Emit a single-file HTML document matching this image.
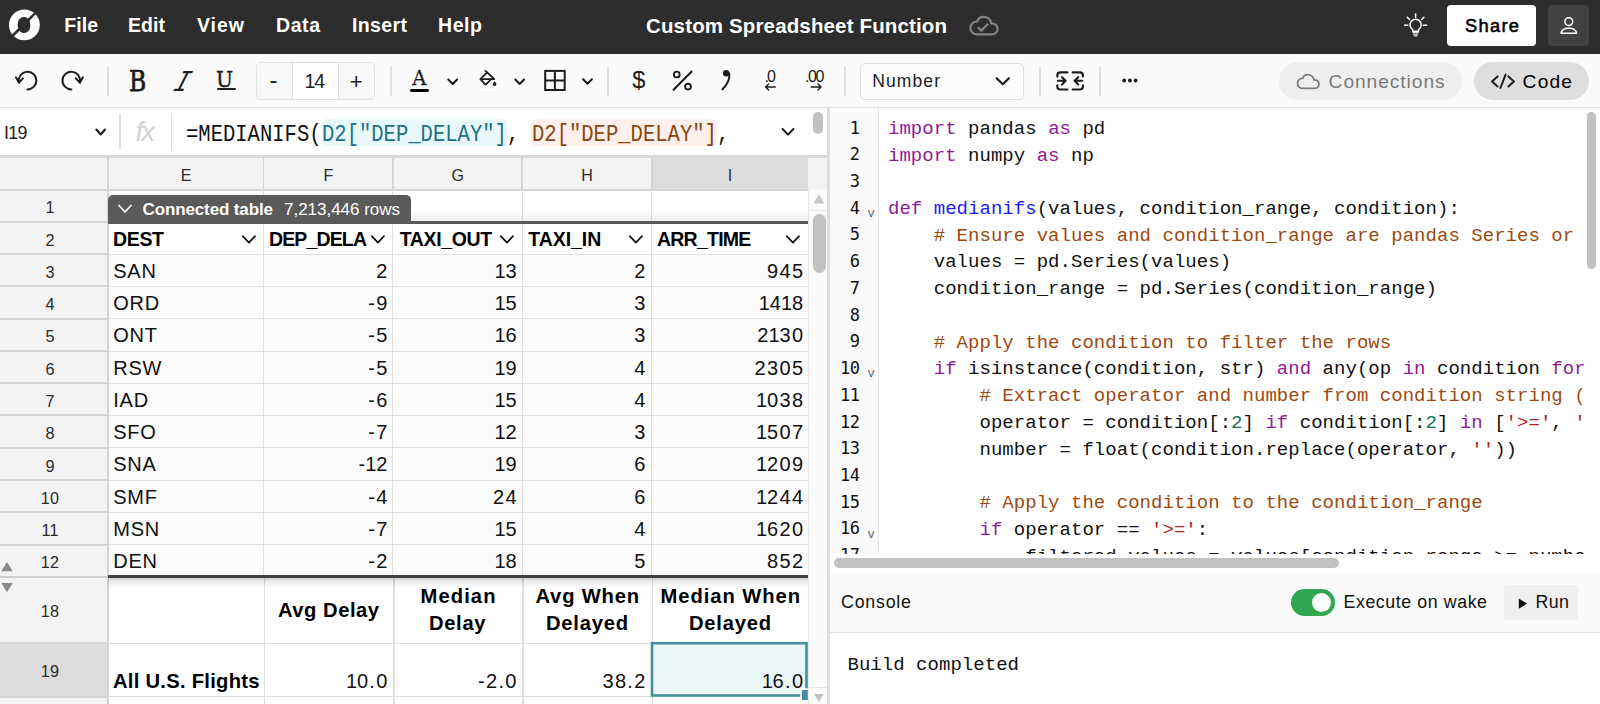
<!DOCTYPE html>
<html lang="en"><head><meta charset="utf-8"><title>Custom Spreadsheet Function</title>
<style>
html,body{margin:0;padding:0;}
body{width:1600px;height:704px;overflow:hidden;position:relative;background:#fff;font-family:"Liberation Sans", sans-serif;color:#000;}
#r{position:absolute;left:0;top:0;width:1600px;height:704px;overflow:hidden;}
#r div,#r span,#r svg{position:absolute;}
#r span{white-space:pre;}
#r span span{position:static;}
#r .cl{position:absolute;}
.m{font-family:"DejaVu Sans Mono", "Liberation Mono", monospace;}
.lm{font-family:"Liberation Mono", "DejaVu Sans Mono", monospace;}
.sf{font-family:"DejaVu Serif", "Liberation Serif", serif;}
</style></head>
<body><div id="r">
<div style="left:0px;top:0px;width:1600px;height:54px;background:#2d2d2d;"></div>
<div style="left:1447.4px;top:5px;width:89px;height:41px;background:#fff;border-radius:4px;"></div>
<div style="left:1548.2px;top:5px;width:41px;height:41px;background:#424242;border-radius:4px;"></div>
<div style="left:0px;top:54px;width:1600px;height:53px;background:#fafafa;"></div>
<div style="left:0px;top:107px;width:1600px;height:1px;background:#e2e2e2;"></div>
<div style="left:107px;top:66px;width:2px;height:29.5px;background:#e0e0e0;"></div>
<div style="left:216.8px;top:88px;width:18.8px;height:2.2px;background:#1c1c1c;border-radius:1px;"></div>
<div style="left:256px;top:62px;width:118.5px;height:37.5px;background:#f8f8f8;border:1px solid #e0e0e0;border-radius:5px;box-sizing:border-box;"></div>
<div style="left:292px;top:63px;width:47px;height:35.5px;background:#fff;border-left:1px solid #e0e0e0;border-right:1px solid #e0e0e0;box-sizing:border-box;"></div>
<div style="left:389.5px;top:66px;width:2px;height:29.5px;background:#e0e0e0;"></div>
<div style="left:410.4px;top:89px;width:19px;height:2.8px;background:#000;border-radius:1.4px;"></div>
<div style="left:479px;top:89px;width:18px;height:2.4px;background:#fff;"></div>
<div style="left:607.4px;top:66px;width:2px;height:29.5px;background:#e0e0e0;"></div>
<div style="left:844px;top:66px;width:2px;height:29.5px;background:#e0e0e0;"></div>
<div style="left:860px;top:63px;width:164px;height:37px;background:#fcfcfc;border:1px solid #e0e0e0;border-radius:5px;box-sizing:border-box;"></div>
<div style="left:1039px;top:66px;width:2px;height:29.5px;background:#e0e0e0;"></div>
<div style="left:1099px;top:66px;width:2px;height:29.5px;background:#e0e0e0;"></div>
<div style="left:1279px;top:62px;width:182.6px;height:37.6px;background:#efefef;border-radius:19px;"></div>
<div style="left:1473.6px;top:62px;width:115.4px;height:37.6px;background:#dedede;border-radius:19px;"></div>
<div style="left:0px;top:108px;width:830px;height:47px;background:#fff;"></div>
<div style="left:0px;top:155px;width:828px;height:3.3px;background:#dadada;"></div>
<div style="left:119px;top:114px;width:1.6px;height:34.5px;background:#dcdcdc;"></div>
<div style="left:170.5px;top:114px;width:1.6px;height:34.5px;background:#dcdcdc;"></div>
<div style="left:321.83px;top:119.3px;width:185.35px;height:27.2px;background:#e7f8fc;border-radius:5px;"></div>
<div style="left:531.4399999999999px;top:119.3px;width:185.35px;height:27.2px;background:#fdf0ea;border-radius:5px;"></div>
<div style="left:813.3px;top:112.4px;width:9.5px;height:21.6px;background:#c1c1c1;border-radius:5px;"></div>
<div style="left:0px;top:158px;width:808px;height:32px;background:#f3f3f3;"></div>
<div style="left:651px;top:158px;width:157px;height:32px;background:#dcdcdc;"></div>
<div style="left:0px;top:190px;width:108px;height:514px;background:#f3f3f3;"></div>
<div style="left:0px;top:643.2px;width:108px;height:53px;background:#dcdcdc;"></div>
<div style="left:108px;top:190px;width:700px;height:64.6px;background:#fff;"></div>
<div style="left:108px;top:254.54000000000002px;width:700px;height:322.7px;background:#fbfbfb;"></div>
<div style="left:108px;top:578px;width:700px;height:126px;background:#fff;"></div>
<div style="left:107px;top:158px;width:2px;height:32px;background:#d4d4d4;"></div>
<div style="left:262.75px;top:158px;width:1.7px;height:32px;background:#d4d4d4;"></div>
<div style="left:392.04999999999995px;top:158px;width:1.7px;height:32px;background:#d4d4d4;"></div>
<div style="left:521.4499999999999px;top:158px;width:1.7px;height:32px;background:#d4d4d4;"></div>
<div style="left:650.85px;top:158px;width:1.7px;height:32px;background:#d4d4d4;"></div>
<div style="left:0px;top:189px;width:808px;height:2px;background:#d4d4d4;"></div>
<div style="left:0px;top:220.87px;width:108px;height:2px;background:#d4d4d4;"></div>
<div style="left:0px;top:253.14000000000001px;width:108px;height:2px;background:#d4d4d4;"></div>
<div style="left:108px;top:253.74px;width:700px;height:1.1px;background:#e2e2e2;"></div>
<div style="left:0px;top:285.41px;width:108px;height:2px;background:#d4d4d4;"></div>
<div style="left:108px;top:286.01px;width:700px;height:1.1px;background:#e2e2e2;"></div>
<div style="left:0px;top:317.68000000000006px;width:108px;height:2px;background:#d4d4d4;"></div>
<div style="left:108px;top:318.28000000000003px;width:700px;height:1.1px;background:#e2e2e2;"></div>
<div style="left:0px;top:349.95000000000005px;width:108px;height:2px;background:#d4d4d4;"></div>
<div style="left:108px;top:350.55px;width:700px;height:1.1px;background:#e2e2e2;"></div>
<div style="left:0px;top:382.22px;width:108px;height:2px;background:#d4d4d4;"></div>
<div style="left:108px;top:382.82px;width:700px;height:1.1px;background:#e2e2e2;"></div>
<div style="left:0px;top:414.49px;width:108px;height:2px;background:#d4d4d4;"></div>
<div style="left:108px;top:415.09px;width:700px;height:1.1px;background:#e2e2e2;"></div>
<div style="left:0px;top:446.76000000000005px;width:108px;height:2px;background:#d4d4d4;"></div>
<div style="left:108px;top:447.36px;width:700px;height:1.1px;background:#e2e2e2;"></div>
<div style="left:0px;top:479.03000000000003px;width:108px;height:2px;background:#d4d4d4;"></div>
<div style="left:108px;top:479.63px;width:700px;height:1.1px;background:#e2e2e2;"></div>
<div style="left:0px;top:511.30000000000007px;width:108px;height:2px;background:#d4d4d4;"></div>
<div style="left:108px;top:511.90000000000003px;width:700px;height:1.1px;background:#e2e2e2;"></div>
<div style="left:0px;top:543.57px;width:108px;height:2px;background:#d4d4d4;"></div>
<div style="left:108px;top:544.1700000000001px;width:700px;height:1.1px;background:#e2e2e2;"></div>
<div style="left:107px;top:190px;width:2px;height:514px;background:#d4d4d4;"></div>
<div style="left:263.0px;top:190px;width:1.2px;height:386px;background:#e0e0e0;"></div>
<div style="left:263.70000000000005px;top:578px;width:1.5px;height:126px;background:#dedede;"></div>
<div style="left:392.29999999999995px;top:190px;width:1.2px;height:386px;background:#e0e0e0;"></div>
<div style="left:393.0px;top:578px;width:1.5px;height:126px;background:#dedede;"></div>
<div style="left:521.6999999999999px;top:190px;width:1.2px;height:386px;background:#e0e0e0;"></div>
<div style="left:522.4px;top:578px;width:1.5px;height:126px;background:#dedede;"></div>
<div style="left:651.1px;top:190px;width:1.2px;height:386px;background:#e0e0e0;"></div>
<div style="left:651.8000000000001px;top:578px;width:1.5px;height:126px;background:#dedede;"></div>
<div style="left:808px;top:158px;width:1.5px;height:546px;background:#e6e6e6;"></div>
<div style="left:108px;top:210px;width:700px;height:12px;background:linear-gradient(rgba(0,0,0,0),rgba(0,0,0,0.07));"></div>
<div style="left:108px;top:221.2px;width:700px;height:3px;background:#595959;"></div>
<div style="left:108px;top:195px;width:303px;height:28.5px;background:#5a5a5a;border-radius:5px 5px 0 0;"></div>
<div style="left:0px;top:576px;width:108px;height:2px;background:#d0d0d0;"></div>
<div style="left:108px;top:575px;width:700px;height:3px;background:#404040;"></div>
<div style="left:108px;top:578px;width:700px;height:10px;background:linear-gradient(rgba(0,0,0,0.17),rgba(0,0,0,0.05) 50%,rgba(0,0,0,0));"></div>
<div style="left:0px;top:642.2px;width:108px;height:2px;background:#d4d4d4;"></div>
<div style="left:108px;top:642.5px;width:700px;height:1.5px;background:#dedede;"></div>
<div style="left:0px;top:695.5px;width:108px;height:2px;background:#d4d4d4;"></div>
<div style="left:108px;top:695.8px;width:700px;height:1.5px;background:#dedede;"></div>
<div style="left:651px;top:642px;width:157px;height:55px;background:#eaf6f8;"></div>
<div style="left:809px;top:190px;width:19px;height:514px;background:#fafafa;"></div>
<div style="left:809px;top:190px;width:19px;height:19.5px;background:#fafafa;border-bottom:1.5px solid #e8e8e8;"></div>
<svg style="left:812px;top:193px;" width="14" height="12" viewBox="0 0 14 12" fill="none"><path d="M1.5 10.5L7 1.5l5.5 9z" fill="#c6c6c6"/></svg>
<div style="left:812.5px;top:214px;width:13px;height:59px;background:#c1c1c1;border-radius:6.5px;"></div>
<div style="left:809px;top:686.5px;width:19px;height:17.5px;background:#fafafa;border-top:1.5px solid #e8e8e8;"></div>
<div style="left:808px;top:158px;width:20px;height:32px;background:#f3f3f3;"></div>
<div style="left:827.2px;top:108px;width:2.8px;height:596px;background:#dedede;"></div>
<div style="left:830px;top:108px;width:770px;height:466px;background:#fff;"></div>
<div style="left:829.6px;top:108px;width:49px;height:446px;background:#fafafa;"></div>
<div style="left:877.8px;top:108px;width:1.2px;height:446px;background:#e6e6e6;"></div>
<div style="left:1587px;top:112.2px;width:9px;height:156.6px;background:#c1c1c1;border-radius:4.5px;"></div>
<div style="left:830px;top:574px;width:770px;height:58px;background:#fafafa;"></div>
<div style="left:830px;top:572.4px;width:770px;height:1.5px;background:#e2e2e2;"></div>
<div style="left:830px;top:632px;width:770px;height:1px;background:#e2e2e2;"></div>
<div style="left:830px;top:633px;width:770px;height:71px;background:#fff;"></div>
<div style="left:1291px;top:589px;width:44.4px;height:27px;background:#2fa850;border-radius:13.5px;"></div>
<div style="left:1312.2px;top:593px;width:19px;height:19px;background:#fff;border-radius:50%;"></div>
<div style="left:1504px;top:585px;width:74px;height:35px;background:#f0f0f0;border-radius:4px;"></div>
<span id="t0" style="top:13.01px;font-size:19.5px;line-height:25px;font-weight:700;color:#fff;letter-spacing:0.102px;left:64.30px;">File</span>
<span id="t1" style="top:13.01px;font-size:19.5px;line-height:25px;font-weight:700;color:#fff;letter-spacing:0.052px;left:128.00px;">Edit</span>
<span id="t2" style="top:13.01px;font-size:19.5px;line-height:25px;font-weight:700;color:#fff;letter-spacing:0.969px;left:197.00px;">View</span>
<span id="t3" style="top:13.01px;font-size:19.5px;line-height:25px;font-weight:700;color:#fff;letter-spacing:0.573px;left:276.00px;">Data</span>
<span id="t4" style="top:13.01px;font-size:19.5px;line-height:25px;font-weight:700;color:#fff;letter-spacing:0.378px;left:352.00px;">Insert</span>
<span id="t5" style="top:13.01px;font-size:19.5px;line-height:25px;font-weight:700;color:#fff;letter-spacing:0.578px;left:438.00px;">Help</span>
<span id="t6" style="top:12.01px;font-size:20.5px;line-height:27px;font-weight:700;color:#fff;letter-spacing:0.143px;left:646.00px;">Custom Spreadsheet Function</span>
<span id="t7" style="top:13.61px;font-size:18.3px;line-height:24px;letter-spacing:1.301px;left:1465.00px;-webkit-text-stroke:0.55px #000;">Share</span>
<span id="t8" class="sf" style="top:63.60px;font-size:27.2px;line-height:35px;color:#1c1c1c;left:129.40px;transform:scaleX(0.86);transform-origin:0 50%;-webkit-text-stroke:0.75px #1c1c1c;">B</span>
<span id="t9" class="lm" style="top:62.60px;font-size:30.5px;line-height:40px;color:#1c1c1c;left:173.00px;transform:skewX(-27deg) scaleX(0.78);transform-origin:50% 50%;">I</span>
<span id="t10" class="sf" style="top:65.00px;font-size:22.5px;line-height:29px;color:#1c1c1c;left:216.00px;transform:scaleX(0.9);transform-origin:0 50%;-webkit-text-stroke:0.45px #1c1c1c;">U</span>
<span id="t11" style="top:64.01px;font-size:24px;line-height:31px;color:#1c1c1c;left:269.40px;">-</span>
<span id="t12" style="top:69.01px;font-size:19.5px;line-height:25px;color:#1c1c1c;letter-spacing:-1.203px;left:304.50px;">14</span>
<span id="t13" style="top:67.00px;font-size:22px;line-height:29px;color:#1c1c1c;left:349.80px;">+</span>
<span id="t14" class="sf" style="top:66.21px;font-size:19.6px;line-height:25px;color:#1c1c1c;left:412.20px;-webkit-text-stroke:0.3px #1c1c1c;">A</span>
<span id="t15" style="top:65.40px;font-size:23.6px;line-height:31px;color:#1c1c1c;left:632.20px;">$</span>
<span id="t16" style="top:65.81px;font-size:16px;line-height:21px;color:#1c1c1c;letter-spacing:-1.844px;left:764.40px;">.0</span>
<span id="t17" style="top:65.81px;font-size:16px;line-height:21px;color:#1c1c1c;letter-spacing:-1.325px;left:804.90px;">.00</span>
<span id="t18" style="top:70.00px;font-size:17.5px;line-height:23px;color:#1c1c1c;letter-spacing:1.090px;left:872.30px;">Number</span>
<span id="t19" style="top:68.81px;font-size:19.2px;line-height:25px;color:#7a7a7a;letter-spacing:0.933px;left:1328.60px;">Connections</span>
<span id="t20" style="top:68.81px;font-size:19.2px;line-height:25px;letter-spacing:1.175px;left:1522.60px;">Code</span>
<span id="t21" style="top:121.72px;font-size:17.8px;line-height:23px;color:#1c1c1c;letter-spacing:-0.609px;left:4.00px;">I19</span>
<span id="t22" style="top:114.41px;font-size:27.5px;line-height:36px;color:#d2d2d2;letter-spacing:-1.991px;left:135.60px;font-style:italic;">fx</span>
<span id="t23" class="lm" style="top:119.20px;font-size:24.2px;line-height:31px;color:#111;left:186.40px;transform:scaleX(0.8490);transform-origin:0 50%;">=MEDIANIFS(</span>
<span id="t24" class="lm" style="top:119.20px;font-size:24.2px;line-height:31px;color:#1f6f86;left:322.03px;transform:scaleX(0.8490);transform-origin:0 50%;">D2[&quot;DEP_DELAY&quot;]</span>
<span id="t25" class="lm" style="top:119.20px;font-size:24.2px;line-height:31px;color:#111;left:506.98px;transform:scaleX(0.8490);transform-origin:0 50%;">, </span>
<span id="t26" class="lm" style="top:119.20px;font-size:24.2px;line-height:31px;color:#8a4513;left:531.64px;transform:scaleX(0.8490);transform-origin:0 50%;">D2[&quot;DEP_DELAY&quot;]</span>
<span id="t27" class="lm" style="top:119.20px;font-size:24.2px;line-height:31px;color:#111;left:716.59px;transform:scaleX(0.8490);transform-origin:0 50%;">,</span>
<span id="t28" style="top:199.00px;font-size:17px;line-height:22px;font-weight:700;color:#fff;letter-spacing:-0.125px;left:142.50px;">Connected table</span>
<span id="t29" style="top:199.00px;font-size:17px;line-height:22px;color:#fff;letter-spacing:-0.019px;left:284.00px;">7,213,446 rows</span>
<span id="t30" style="top:226.62px;font-size:19.5px;line-height:25px;font-weight:700;letter-spacing:-0.339px;left:113.00px;">DEST</span>
<span id="t31" style="top:226.62px;font-size:19.5px;line-height:25px;font-weight:700;letter-spacing:-0.862px;left:269.00px;">DEP_DELA</span>
<span id="t32" style="top:226.62px;font-size:19.5px;line-height:25px;font-weight:700;letter-spacing:-0.341px;left:399.70px;">TAXI_OUT</span>
<span id="t33" style="top:226.62px;font-size:19.5px;line-height:25px;font-weight:700;letter-spacing:-0.055px;left:528.30px;">TAXI_IN</span>
<span id="t34" style="top:226.62px;font-size:19.5px;line-height:25px;font-weight:700;letter-spacing:-0.753px;left:656.90px;">ARR_TIME</span>
<span id="t35" style="top:258.01px;font-size:20px;line-height:26px;color:#111;letter-spacing:0.800px;left:113.20px;">SAN</span>
<span id="t36" style="top:258.01px;font-size:20px;line-height:26px;color:#111;letter-spacing:1.300px;right:1211.40px;">2</span>
<span id="t37" style="top:258.01px;font-size:20px;line-height:26px;color:#111;letter-spacing:1.300px;right:1082.10px;"><span style="margin-left:-1.2px;letter-spacing:-0.20px">1</span>3</span>
<span id="t38" style="top:258.01px;font-size:20px;line-height:26px;color:#111;letter-spacing:1.300px;right:953.40px;">2</span>
<span id="t39" style="top:258.01px;font-size:20px;line-height:26px;color:#111;letter-spacing:1.300px;right:795.70px;">945</span>
<span id="t40" style="top:290.01px;font-size:20px;line-height:26px;color:#111;letter-spacing:0.800px;left:113.20px;">ORD</span>
<span id="t41" style="top:290.01px;font-size:20px;line-height:26px;color:#111;letter-spacing:1.300px;right:1211.40px;">-9</span>
<span id="t42" style="top:290.01px;font-size:20px;line-height:26px;color:#111;letter-spacing:1.300px;right:1082.10px;"><span style="margin-left:-1.2px;letter-spacing:-0.20px">1</span>5</span>
<span id="t43" style="top:290.01px;font-size:20px;line-height:26px;color:#111;letter-spacing:1.300px;right:953.40px;">3</span>
<span id="t44" style="top:290.01px;font-size:20px;line-height:26px;color:#111;letter-spacing:1.300px;right:795.70px;"><span style="margin-left:-1.2px;letter-spacing:-0.20px">1</span>4<span style="margin-left:-1.2px;letter-spacing:-0.20px">1</span>8</span>
<span id="t45" style="top:322.01px;font-size:20px;line-height:26px;color:#111;letter-spacing:0.800px;left:113.20px;">ONT</span>
<span id="t46" style="top:322.01px;font-size:20px;line-height:26px;color:#111;letter-spacing:1.300px;right:1211.40px;">-5</span>
<span id="t47" style="top:322.01px;font-size:20px;line-height:26px;color:#111;letter-spacing:1.300px;right:1082.10px;"><span style="margin-left:-1.2px;letter-spacing:-0.20px">1</span>6</span>
<span id="t48" style="top:322.01px;font-size:20px;line-height:26px;color:#111;letter-spacing:1.300px;right:953.40px;">3</span>
<span id="t49" style="top:322.01px;font-size:20px;line-height:26px;color:#111;letter-spacing:1.300px;right:795.70px;">2<span style="margin-left:-1.2px;letter-spacing:-0.20px">1</span>30</span>
<span id="t50" style="top:355.01px;font-size:20px;line-height:26px;color:#111;letter-spacing:0.800px;left:113.20px;">RSW</span>
<span id="t51" style="top:355.01px;font-size:20px;line-height:26px;color:#111;letter-spacing:1.300px;right:1211.40px;">-5</span>
<span id="t52" style="top:355.01px;font-size:20px;line-height:26px;color:#111;letter-spacing:1.300px;right:1082.10px;"><span style="margin-left:-1.2px;letter-spacing:-0.20px">1</span>9</span>
<span id="t53" style="top:355.01px;font-size:20px;line-height:26px;color:#111;letter-spacing:1.300px;right:953.40px;">4</span>
<span id="t54" style="top:355.01px;font-size:20px;line-height:26px;color:#111;letter-spacing:1.300px;right:795.70px;">2305</span>
<span id="t55" style="top:387.01px;font-size:20px;line-height:26px;color:#111;letter-spacing:0.800px;left:113.20px;">IAD</span>
<span id="t56" style="top:387.01px;font-size:20px;line-height:26px;color:#111;letter-spacing:1.300px;right:1211.40px;">-6</span>
<span id="t57" style="top:387.01px;font-size:20px;line-height:26px;color:#111;letter-spacing:1.300px;right:1082.10px;"><span style="margin-left:-1.2px;letter-spacing:-0.20px">1</span>5</span>
<span id="t58" style="top:387.01px;font-size:20px;line-height:26px;color:#111;letter-spacing:1.300px;right:953.40px;">4</span>
<span id="t59" style="top:387.01px;font-size:20px;line-height:26px;color:#111;letter-spacing:1.300px;right:795.70px;"><span style="margin-left:-1.2px;letter-spacing:-0.20px">1</span>038</span>
<span id="t60" style="top:419.01px;font-size:20px;line-height:26px;color:#111;letter-spacing:0.800px;left:113.20px;">SFO</span>
<span id="t61" style="top:419.01px;font-size:20px;line-height:26px;color:#111;letter-spacing:1.300px;right:1211.40px;">-7</span>
<span id="t62" style="top:419.01px;font-size:20px;line-height:26px;color:#111;letter-spacing:1.300px;right:1082.10px;"><span style="margin-left:-1.2px;letter-spacing:-0.20px">1</span>2</span>
<span id="t63" style="top:419.01px;font-size:20px;line-height:26px;color:#111;letter-spacing:1.300px;right:953.40px;">3</span>
<span id="t64" style="top:419.01px;font-size:20px;line-height:26px;color:#111;letter-spacing:1.300px;right:795.70px;"><span style="margin-left:-1.2px;letter-spacing:-0.20px">1</span>507</span>
<span id="t65" style="top:451.01px;font-size:20px;line-height:26px;color:#111;letter-spacing:0.800px;left:113.20px;">SNA</span>
<span id="t66" style="top:451.01px;font-size:20px;line-height:26px;color:#111;letter-spacing:1.300px;right:1211.40px;">-<span style="margin-left:-1.2px;letter-spacing:-0.20px">1</span>2</span>
<span id="t67" style="top:451.01px;font-size:20px;line-height:26px;color:#111;letter-spacing:1.300px;right:1082.10px;"><span style="margin-left:-1.2px;letter-spacing:-0.20px">1</span>9</span>
<span id="t68" style="top:451.01px;font-size:20px;line-height:26px;color:#111;letter-spacing:1.300px;right:953.40px;">6</span>
<span id="t69" style="top:451.01px;font-size:20px;line-height:26px;color:#111;letter-spacing:1.300px;right:795.70px;"><span style="margin-left:-1.2px;letter-spacing:-0.20px">1</span>209</span>
<span id="t70" style="top:484.01px;font-size:20px;line-height:26px;color:#111;letter-spacing:0.800px;left:113.20px;">SMF</span>
<span id="t71" style="top:484.01px;font-size:20px;line-height:26px;color:#111;letter-spacing:1.300px;right:1211.40px;">-4</span>
<span id="t72" style="top:484.01px;font-size:20px;line-height:26px;color:#111;letter-spacing:1.300px;right:1082.10px;">24</span>
<span id="t73" style="top:484.01px;font-size:20px;line-height:26px;color:#111;letter-spacing:1.300px;right:953.40px;">6</span>
<span id="t74" style="top:484.01px;font-size:20px;line-height:26px;color:#111;letter-spacing:1.300px;right:795.70px;"><span style="margin-left:-1.2px;letter-spacing:-0.20px">1</span>244</span>
<span id="t75" style="top:516.01px;font-size:20px;line-height:26px;color:#111;letter-spacing:0.800px;left:113.20px;">MSN</span>
<span id="t76" style="top:516.01px;font-size:20px;line-height:26px;color:#111;letter-spacing:1.300px;right:1211.40px;">-7</span>
<span id="t77" style="top:516.01px;font-size:20px;line-height:26px;color:#111;letter-spacing:1.300px;right:1082.10px;"><span style="margin-left:-1.2px;letter-spacing:-0.20px">1</span>5</span>
<span id="t78" style="top:516.01px;font-size:20px;line-height:26px;color:#111;letter-spacing:1.300px;right:953.40px;">4</span>
<span id="t79" style="top:516.01px;font-size:20px;line-height:26px;color:#111;letter-spacing:1.300px;right:795.70px;"><span style="margin-left:-1.2px;letter-spacing:-0.20px">1</span>620</span>
<span id="t80" style="top:548.01px;font-size:20px;line-height:26px;color:#111;letter-spacing:0.800px;left:113.20px;">DEN</span>
<span id="t81" style="top:548.01px;font-size:20px;line-height:26px;color:#111;letter-spacing:1.300px;right:1211.40px;">-2</span>
<span id="t82" style="top:548.01px;font-size:20px;line-height:26px;color:#111;letter-spacing:1.300px;right:1082.10px;"><span style="margin-left:-1.2px;letter-spacing:-0.20px">1</span>8</span>
<span id="t83" style="top:548.01px;font-size:20px;line-height:26px;color:#111;letter-spacing:1.300px;right:953.40px;">5</span>
<span id="t84" style="top:548.01px;font-size:20px;line-height:26px;color:#111;letter-spacing:1.300px;right:795.70px;">852</span>
<span id="t85" style="top:197.41px;font-size:16.2px;line-height:21px;color:#2a2a2a;letter-spacing:0.200px;left:-250.00px;width:600px;text-align:center;">1</span>
<span id="t86" style="top:229.68px;font-size:16.2px;line-height:21px;color:#2a2a2a;letter-spacing:0.200px;left:-250.00px;width:600px;text-align:center;">2</span>
<span id="t87" style="top:261.94px;font-size:16.2px;line-height:21px;color:#2a2a2a;letter-spacing:0.200px;left:-250.00px;width:600px;text-align:center;">3</span>
<span id="t88" style="top:294.21px;font-size:16.2px;line-height:21px;color:#2a2a2a;letter-spacing:0.200px;left:-250.00px;width:600px;text-align:center;">4</span>
<span id="t89" style="top:326.49px;font-size:16.2px;line-height:21px;color:#2a2a2a;letter-spacing:0.200px;left:-250.00px;width:600px;text-align:center;">5</span>
<span id="t90" style="top:358.76px;font-size:16.2px;line-height:21px;color:#2a2a2a;letter-spacing:0.200px;left:-250.00px;width:600px;text-align:center;">6</span>
<span id="t91" style="top:391.02px;font-size:16.2px;line-height:21px;color:#2a2a2a;letter-spacing:0.200px;left:-250.00px;width:600px;text-align:center;">7</span>
<span id="t92" style="top:423.29px;font-size:16.2px;line-height:21px;color:#2a2a2a;letter-spacing:0.200px;left:-250.00px;width:600px;text-align:center;">8</span>
<span id="t93" style="top:455.57px;font-size:16.2px;line-height:21px;color:#2a2a2a;letter-spacing:0.200px;left:-250.00px;width:600px;text-align:center;">9</span>
<span id="t94" style="top:487.83px;font-size:16.2px;line-height:21px;color:#2a2a2a;letter-spacing:0.200px;left:-250.00px;width:600px;text-align:center;">10</span>
<span id="t95" style="top:520.10px;font-size:16.2px;line-height:21px;color:#2a2a2a;letter-spacing:0.200px;left:-250.00px;width:600px;text-align:center;">11</span>
<span id="t96" style="top:552.38px;font-size:16.2px;line-height:21px;color:#2a2a2a;letter-spacing:0.200px;left:-250.00px;width:600px;text-align:center;">12</span>
<span id="t97" style="top:600.71px;font-size:16.2px;line-height:21px;color:#2a2a2a;letter-spacing:0.200px;left:-250.00px;width:600px;text-align:center;">18</span>
<span id="t98" style="top:661.21px;font-size:16.2px;line-height:21px;color:#2a2a2a;letter-spacing:0.200px;left:-250.00px;width:600px;text-align:center;">19</span>
<span id="t99" style="top:164.81px;font-size:16px;line-height:21px;color:#2a2a2a;left:-114.00px;width:600px;text-align:center;">E</span>
<span id="t100" style="top:164.81px;font-size:16px;line-height:21px;color:#2a2a2a;left:28.50px;width:600px;text-align:center;">F</span>
<span id="t101" style="top:164.81px;font-size:16px;line-height:21px;color:#2a2a2a;left:157.80px;width:600px;text-align:center;">G</span>
<span id="t102" style="top:164.81px;font-size:16px;line-height:21px;color:#2a2a2a;left:287.00px;width:600px;text-align:center;">H</span>
<span id="t103" style="top:164.81px;font-size:16px;line-height:21px;color:#2a2a2a;left:430.00px;width:600px;text-align:center;">I</span>
<span id="t104" style="top:597.00px;font-size:20.2px;line-height:26px;font-weight:700;letter-spacing:0.516px;left:278.00px;">Avg Delay</span>
<span id="t105" style="top:582.80px;font-size:20.2px;line-height:26px;font-weight:700;letter-spacing:1.091px;left:420.50px;">Median</span>
<span id="t106" style="top:609.80px;font-size:20.2px;line-height:26px;font-weight:700;letter-spacing:0.656px;left:429.00px;">Delay</span>
<span id="t107" style="top:582.80px;font-size:20.2px;line-height:26px;font-weight:700;letter-spacing:0.792px;left:535.50px;">Avg When</span>
<span id="t108" style="top:609.80px;font-size:20.2px;line-height:26px;font-weight:700;letter-spacing:0.760px;left:546.00px;">Delayed</span>
<span id="t109" style="top:582.80px;font-size:20.2px;line-height:26px;font-weight:700;letter-spacing:0.939px;left:660.50px;">Median When</span>
<span id="t110" style="top:609.80px;font-size:20.2px;line-height:26px;font-weight:700;letter-spacing:0.760px;left:689.00px;">Delayed</span>
<span id="t111" style="top:668.00px;font-size:20.2px;line-height:26px;font-weight:700;letter-spacing:0.271px;left:113.00px;">All U.S. Flights</span>
<span id="t112" style="top:668.11px;font-size:20px;line-height:26px;color:#111;letter-spacing:1.300px;right:1211.40px;"><span style="margin-left:-1.2px;letter-spacing:-0.20px">1</span>0.0</span>
<span id="t113" style="top:668.11px;font-size:20px;line-height:26px;color:#111;letter-spacing:1.300px;right:1082.30px;">-2.0</span>
<span id="t114" style="top:668.11px;font-size:20px;line-height:26px;color:#111;letter-spacing:1.300px;right:953.40px;">38.2</span>
<span id="t115" style="top:668.11px;font-size:20px;line-height:26px;color:#111;letter-spacing:1.300px;right:795.70px;"><span style="margin-left:-1.2px;letter-spacing:-0.20px">1</span>6.0</span>
<span id="t116" class="m" style="top:116.51px;font-size:17px;line-height:22px;color:#111;letter-spacing:-0.450px;right:740.35px;">1</span>
<span id="t117" class="m" style="top:143.23px;font-size:17px;line-height:22px;color:#111;letter-spacing:-0.450px;right:740.35px;">2</span>
<span id="t118" class="m" style="top:169.96px;font-size:17px;line-height:22px;color:#111;letter-spacing:-0.450px;right:740.35px;">3</span>
<span id="t119" class="m" style="top:196.70px;font-size:17px;line-height:22px;color:#111;letter-spacing:-0.450px;right:740.35px;">4</span>
<span id="t120" class="m" style="top:223.43px;font-size:17px;line-height:22px;color:#111;letter-spacing:-0.450px;right:740.35px;">5</span>
<span id="t121" class="m" style="top:250.15px;font-size:17px;line-height:22px;color:#111;letter-spacing:-0.450px;right:740.35px;">6</span>
<span id="t122" class="m" style="top:276.88px;font-size:17px;line-height:22px;color:#111;letter-spacing:-0.450px;right:740.35px;">7</span>
<span id="t123" class="m" style="top:303.62px;font-size:17px;line-height:22px;color:#111;letter-spacing:-0.450px;right:740.35px;">8</span>
<span id="t124" class="m" style="top:330.34px;font-size:17px;line-height:22px;color:#111;letter-spacing:-0.450px;right:740.35px;">9</span>
<span id="t125" class="m" style="top:357.07px;font-size:17px;line-height:22px;color:#111;letter-spacing:-0.450px;right:740.35px;">10</span>
<span id="t126" class="m" style="top:383.81px;font-size:17px;line-height:22px;color:#111;letter-spacing:-0.450px;right:740.35px;">11</span>
<span id="t127" class="m" style="top:410.54px;font-size:17px;line-height:22px;color:#111;letter-spacing:-0.450px;right:740.35px;">12</span>
<span id="t128" class="m" style="top:437.26px;font-size:17px;line-height:22px;color:#111;letter-spacing:-0.450px;right:740.35px;">13</span>
<span id="t129" class="m" style="top:463.99px;font-size:17px;line-height:22px;color:#111;letter-spacing:-0.450px;right:740.35px;">14</span>
<span id="t130" class="m" style="top:490.73px;font-size:17px;line-height:22px;color:#111;letter-spacing:-0.450px;right:740.35px;">15</span>
<span id="t131" class="m" style="top:517.46px;font-size:17px;line-height:22px;color:#111;letter-spacing:-0.450px;right:740.35px;">16</span>
<span id="t132" class="m" style="top:544.18px;font-size:17px;line-height:22px;color:#111;letter-spacing:-0.450px;right:740.35px;">17</span>
<span id="t133" style="top:203.80px;font-size:13.4px;line-height:17px;color:#6a6a6a;left:867.80px;">v</span>
<span id="t134" style="top:364.18px;font-size:13.4px;line-height:17px;color:#6a6a6a;left:867.80px;">v</span>
<span id="t135" style="top:524.55px;font-size:13.4px;line-height:17px;color:#6a6a6a;left:867.80px;">v</span>
<span id="t136" style="top:591.22px;font-size:17.8px;line-height:23px;color:#111;letter-spacing:0.792px;left:841.00px;">Console</span>
<span id="t137" style="top:591.22px;font-size:17.8px;line-height:23px;color:#111;letter-spacing:0.577px;left:1343.50px;">Execute on wake</span>
<span id="t138" style="top:591.22px;font-size:17.8px;line-height:23px;color:#111;letter-spacing:0.438px;left:1535.50px;">Run</span>
<span id="t139" class="lm" style="top:653.11px;font-size:19px;line-height:25px;color:#111;letter-spacing:0.035px;left:847.50px;">Build completed</span>
<div style="left:0;top:108px;width:1583.6px;height:445.5px;overflow:hidden;"><div class="lm" style="left:0;top:-108px;width:1700px;height:704px;font-size:19px;letter-spacing:0.035px;color:#111;"><span class="cl" style="left:888px;top:115.84px;line-height:26px;"><span style="color:#8f1a97">import</span> pandas <span style="color:#8f1a97">as</span> pd</span>
<span class="cl" style="left:888px;top:142.57px;line-height:26px;"><span style="color:#8f1a97">import</span> numpy <span style="color:#8f1a97">as</span> np</span>
<span class="cl" style="left:888px;top:196.03px;line-height:26px;"><span style="color:#8f1a97">def</span> <span style="color:#1b1bff">medianifs</span>(values, condition_range, condition):</span>
<span class="cl" style="left:888px;top:222.76px;line-height:26px;">    <span style="color:#9c4a12"># Ensure values and condition_range are pandas Series or numpy arrays</span></span>
<span class="cl" style="left:888px;top:249.49px;line-height:26px;">    values = pd.Series(values)</span>
<span class="cl" style="left:888px;top:276.22px;line-height:26px;">    condition_range = pd.Series(condition_range)</span>
<span class="cl" style="left:888px;top:329.68px;line-height:26px;">    <span style="color:#9c4a12"># Apply the condition to filter the rows</span></span>
<span class="cl" style="left:888px;top:356.41px;line-height:26px;">    <span style="color:#8f1a97">if</span> isinstance(condition, str) <span style="color:#8f1a97">and</span> any(op <span style="color:#8f1a97">in</span> condition <span style="color:#8f1a97">for</span> op <span style="color:#8f1a97">in</span> [</span>
<span class="cl" style="left:888px;top:383.14px;line-height:26px;">        <span style="color:#9c4a12"># Extract operator and number from condition string (e.g. &quot;&gt;=10&quot;)</span></span>
<span class="cl" style="left:888px;top:409.87px;line-height:26px;">        operator = condition[:<span style="color:#11724f">2</span>] <span style="color:#8f1a97">if</span> condition[:<span style="color:#11724f">2</span>] <span style="color:#8f1a97">in</span> [<span style="color:#b0241f">&#x27;&gt;=&#x27;</span>, <span style="color:#b0241f">&#x27;&lt;=&#x27;</span>] </span>
<span class="cl" style="left:888px;top:436.60px;line-height:26px;">        number = float(condition.replace(operator, <span style="color:#b0241f">&#x27;&#x27;</span>))</span>
<span class="cl" style="left:888px;top:490.06px;line-height:26px;">        <span style="color:#9c4a12"># Apply the condition to the condition_range</span></span>
<span class="cl" style="left:888px;top:516.79px;line-height:26px;">        <span style="color:#8f1a97">if</span> operator == <span style="color:#b0241f">&#x27;&gt;=&#x27;</span>:</span>
<span class="cl" style="left:888px;top:543.52px;line-height:26px;">            filtered_values = values[condition_range &gt;= number]</span></div></div><div style="left:829.6px;top:553.7px;width:771px;height:20.3px;background:#fff;"></div><div style="left:834px;top:558px;width:505px;height:10.3px;background:#c1c1c1;border-radius:5.2px;"></div>
<svg style="left:0;top:0;" width="1600" height="704" viewBox="0 0 1600 704" fill="none"><circle cx="24.4" cy="24.9" r="15.4" fill="#fff"/><rect x="17.7" y="17.1" width="12.6" height="15.8" rx="6.1" ry="6.9" fill="#2d2d2d"/><path d="M12.4 36 L36 12.4" stroke="#2d2d2d" stroke-width="2.5"/>
<path d="M976.6 34.3H992.3A5.4 5.4 0 1 0 991.2 23.6A7.4 7.4 0 0 0 977 21.5A6.4 6.4 0 1 0 976.6 34.3Z" stroke="#858585" stroke-width="2.2" stroke-linejoin="round"/><path d="M977.8 27.2L981.3 30.6L988.1 23.8" stroke="#858585" stroke-width="2.2"/>
<g stroke="#fff" stroke-width="1.5" stroke-linecap="round"><path d="M1415.6 14v3.4M1407.3 17.3l2.2 2.2M1423.9 17.3l-2.2 2.2M1404.6 25.3h3.2M1423.4 25.3h3.2"/><path d="M1412.7 31.2v-1.6a5.6 5.6 0 1 1 5.8 0v1.6z" stroke-linejoin="round"/></g><path d="M1412.6 32.6h6M1413 34.3h5.2M1413.8 35.9h3.6" stroke="#e6e6e6" stroke-width="1.1"/>
<circle cx="1568.8" cy="21.6" r="3.9" stroke="#fff" stroke-width="1.5"/><path d="M1561 33.2c.5-3 3.4-5 7.8-5s7.3 2 7.8 5z" stroke="#fff" stroke-width="1.5" stroke-linejoin="round"/>
<g stroke="#1c1c1c" stroke-width="2" stroke-linecap="round" stroke-linejoin="round"><path d="M18.9 82.4A8.8 8.8 0 1 1 27.4 89.4"/><path d="M15.9 77.3L19 82.7L22.9 78.3"/><path d="M79.9 82.4A8.8 8.8 0 1 0 71.4 89.4"/><path d="M82.9 77.3L79.8 82.7L75.9 78.3"/></g>
<path d="M448.3 79.5L452.7 84.0L457.1 79.5" stroke="#1c1c1c" stroke-width="2.0" stroke-linecap="round" stroke-linejoin="round"/>
<g stroke="#1c1c1c" stroke-width="1.8" stroke-linejoin="round" stroke-linecap="round"><path d="M485.5 70.9L494.2 79.1H481.4"/><path d="M486.9 72.6L480.4 79.2L484.9 84.1a0.9 0.9 0 0 0 1.3 0L491 79.3"/></g><path d="M494.6 81.3c1.1 1.4 1.8 2.2 1.8 3a1.8 1.8 0 0 1-3.6 0c0-.8.7-1.6 1.8-3z" fill="#1c1c1c"/>
<path d="M515.3 79.5L519.6999999999999 84.0L524.0999999999999 79.5" stroke="#1c1c1c" stroke-width="2.0" stroke-linecap="round" stroke-linejoin="round"/>
<rect x="545.2" y="70.9" width="19.5" height="19.1" stroke="#1c1c1c" stroke-width="2"/><path d="M554.9 71V90M545 80.5H565" stroke="#1c1c1c" stroke-width="2"/>
<path d="M583.1 79.3L587.5 83.8L591.9 79.3" stroke="#1c1c1c" stroke-width="2.0" stroke-linecap="round" stroke-linejoin="round"/>
<path d="M673.6 89.8L691.6 71.5" stroke="#1c1c1c" stroke-width="2" stroke-linecap="round"/><circle cx="676.8" cy="74.5" r="2.9" stroke="#1c1c1c" stroke-width="1.9"/><circle cx="688" cy="86.6" r="2.9" stroke="#1c1c1c" stroke-width="1.9"/>
<circle cx="726.2" cy="73.2" r="3.2" fill="#1c1c1c"/><path d="M729.3 73.6c.6 6-2.6 11.6-6.8 15.6" stroke="#1c1c1c" stroke-width="2" stroke-linecap="round"/>
<path d="M775.3 87H765.6M768.6 84L765.6 87L768.6 90" stroke="#1c1c1c" stroke-width="1.4" stroke-linecap="round" stroke-linejoin="round"/>
<path d="M811.2 87H821M818 84L821 87L818 90" stroke="#1c1c1c" stroke-width="1.4" stroke-linecap="round" stroke-linejoin="round"/>
<path d="M996.7 78.2L1002.8000000000001 84.2L1008.9000000000001 78.2" stroke="#1c1c1c" stroke-width="2.2" stroke-linecap="round" stroke-linejoin="round"/>
<g stroke="#1c1c1c" stroke-width="2.1" stroke-linecap="round" stroke-linejoin="round"><path d="M1057.3 76.6V75.4a3 3 0 0 1 3-3H1067.4M1057.3 85.3v1.2a3 3 0 0 0 3 3H1067.4M1082.9 76.6V75.4a3 3 0 0 0-3-3H1072.6M1082.9 85.3v1.2a3 3 0 0 1-3 3H1072.6"/><path d="M1058 80.8H1065.4M1062 77.2L1065.6 80.8L1062 84.4M1082.2 80.8H1074.8M1078.2 77.2L1074.6 80.8L1078.2 84.4"/></g>
<circle cx="1124.2" cy="80.5" r="1.9" fill="#1c1c1c"/>
<circle cx="1129.9" cy="80.5" r="1.9" fill="#1c1c1c"/>
<circle cx="1135.6" cy="80.5" r="1.9" fill="#1c1c1c"/>
<path transform="translate(1296.4 73.6) scale(0.79) translate(-969 -15.5)" d="M976.6 34.3H992.3A5.4 5.4 0 1 0 991.2 23.6A7.4 7.4 0 0 0 977 21.5A6.4 6.4 0 1 0 976.6 34.3Z" stroke="#7c7c7c" stroke-width="2.2" stroke-linejoin="round"/>
<path d="M1497.6 76.4L1492 81.4L1497.6 86.4M1508.4 76.4L1514 81.4L1508.4 86.4M1505.6 74.6L1500.4 88" stroke="#1c1c1c" stroke-width="2" stroke-linecap="round" stroke-linejoin="round"/>
<path d="M96.4 129.6L100.7 134.4L105.0 129.6" stroke="#1c1c1c" stroke-width="2.2" stroke-linecap="round" stroke-linejoin="round"/>
<path d="M782.6 129.0L788.0 134.6L793.4 129.0" stroke="#1c1c1c" stroke-width="2.0" stroke-linecap="round" stroke-linejoin="round"/>
<path d="M119 205.5L125.0 212.0L131 205.5" stroke="#fff" stroke-width="1.8" stroke-linecap="round" stroke-linejoin="round"/>
<path d="M242.8 236.2L248.9 242.6L255.0 236.2" stroke="#111" stroke-width="1.7" stroke-linecap="round" stroke-linejoin="round"/>
<path d="M371.8 236.2L377.90000000000003 242.6L384.0 236.2" stroke="#111" stroke-width="1.7" stroke-linecap="round" stroke-linejoin="round"/>
<path d="M500.8 236.2L506.90000000000003 242.6L513.0 236.2" stroke="#111" stroke-width="1.7" stroke-linecap="round" stroke-linejoin="round"/>
<path d="M629.8 236.2L635.9 242.6L642.0 236.2" stroke="#111" stroke-width="1.7" stroke-linecap="round" stroke-linejoin="round"/>
<path d="M786.8 236.2L792.9 242.6L799.0 236.2" stroke="#111" stroke-width="1.7" stroke-linecap="round" stroke-linejoin="round"/>
<path d="M1.2 571.2L7 562l5.8 9.2zM1.2 583L7 592.2l5.8-9.2z" fill="#8a8a8a"/>
<rect x="652" y="643.2" width="154.5" height="52.3" stroke="#4390a0" stroke-width="2.6"/><rect x="800.2" y="688.2" width="8" height="12" fill="#fff"/><rect x="802" y="690" width="5.8" height="10" fill="#438f9f"/>
<path d="M814 694L818.9 702l4.9-8z" fill="#c2c2c2"/>
<path d="M1518.8 598.4L1527 603.6L1518.8 608.8z" fill="#111"/></svg>
</div></body></html>
